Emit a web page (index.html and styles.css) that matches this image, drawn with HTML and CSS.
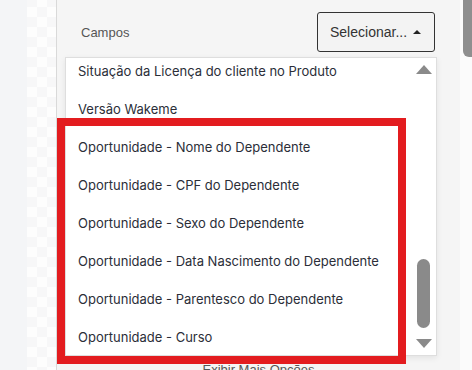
FILE: index.html
```html
<!DOCTYPE html>
<html lang="pt-BR">
<head>
  <meta charset="UTF-8">
  <meta name="viewport" content="width=device-width, initial-scale=1.0">
  <title>Campos</title>
  <link rel="stylesheet" href="styles.css">
</head>
<body>

  <div class="gutter"></div>
  <div class="checker"></div>

  <!-- painel de filtros -->
  <section class="panel">
    <div class="field-row">
      <span class="field-label">Campos</span>
      <button class="select-btn">
        <span>Selecionar...</span>
        <span class="caret"></span>
      </button>
    </div>

    <div class="dropdown">
      <ul class="options">
        <li>Situação da Licença do cliente no Produto</li>
        <li>Versão Wakeme</li>
        <li>Oportunidade - Nome do Dependente</li>
        <li>Oportunidade - CPF do Dependente</li>
        <li>Oportunidade - Sexo do Dependente</li>
        <li>Oportunidade - Data Nascimento do Dependente</li>
        <li>Oportunidade - Parentesco do Dependente</li>
        <li>Oportunidade - Curso</li>
      </ul>
      <div class="list-scroll">
        <span class="arrow-up"></span>
        <span class="thumb"></span>
        <span class="arrow-down"></span>
      </div>
    </div>

    <p class="more">Exibir Mais Opções</p>
  </section>

  <div class="page-scroll">
    <span class="page-thumb"></span>
  </div>

  <!-- destaque -->
  <div class="highlight"></div>

</body>
</html>
```

FILE: styles.css
```css
body {
  margin: 0;
  height: 370px;
  overflow: hidden;
  display: flex;
  background-color: #f4f5f7;
  font-family: "Liberation Sans", Arial, sans-serif;
  color: #333;
}

.gutter {
  width: 27px;
}

.checker {
  width: 29px;
  background-color: #fdfdfd;
  background-image: repeating-conic-gradient(#f7f7f8 0 25%, #fdfdfd 0 50%);
  background-size: 20px 20px;
  background-position: 0 7px;
}

/* painel */
.panel {
  width: 403px;
  border-left: 1px solid #d9d9d9;
  background-color: #f5f5f5;
}

.field-row {
  display: flex;
  align-items: center;
  justify-content: space-between;
  padding: 12px 25px 0 24px;
}

.field-label {
  font-size: 13px;
  color: #555;
}

.select-btn {
  width: 118px;
  height: 40px;
  display: flex;
  align-items: center;
  justify-content: space-between;
  padding: 0 13px 0 12px;
  background-color: #f3f3f3;
  border: 1px solid #333;
  border-radius: 3px;
  font-family: "Liberation Sans", Arial, sans-serif;
  font-size: 14px;
  color: #333;
}

.caret {
  width: 0;
  height: 0;
  border-left: 4px solid transparent;
  border-right: 4px solid transparent;
  border-bottom: 4px solid #222;
}

/* lista de opções */
.dropdown {
  display: flex;
  width: 370px;
  height: 297px;
  margin: 5px 0 0 8px;
  background-color: #fff;
  border: 1px solid #dedede;
  box-shadow: 0 2px 6px rgba(0, 0, 0, 0.08);
  overflow: hidden;
}

.options {
  flex: 1;
  list-style: none;
  margin: -6px 0 0;
  padding: 0;
  font-family: Inter, "Liberation Sans", sans-serif;
  font-size: 13px;
  color: #2b2e38;
}

.options li {
  height: 38px;
  line-height: 38px;
  padding-left: 12px;
  white-space: nowrap;
}

.list-scroll {
  width: 25px;
  display: flex;
  flex-direction: column;
  align-items: center;
  padding-top: 7px;
}

.arrow-up {
  width: 0;
  height: 0;
  border-left: 8px solid transparent;
  border-right: 8px solid transparent;
  border-bottom: 9px solid #8a8a8a;
}

.thumb {
  width: 13px;
  height: 69px;
  margin-top: 185px;
  border-radius: 7px;
  background-color: #8a8a8a;
}

.arrow-down {
  width: 0;
  height: 0;
  margin-top: 11px;
  border-left: 8px solid transparent;
  border-right: 8px solid transparent;
  border-top: 9px solid #8a8a8a;
}

.more {
  margin: 6px 0 0;
  text-align: center;
  font-size: 13px;
  color: #555;
}

/* barra de rolagem da página */
.page-scroll {
  flex: 1;
  display: flex;
  justify-content: flex-end;
  background-color: #fbfbfb;
}

.page-scroll .page-thumb {
  width: 9px;
  height: 57px;
  background-color: #8f8f8f;
  border-radius: 0 0 0 6px;
}

/* caixa vermelha de destaque */
.highlight {
  position: absolute;
  left: 57px;
  top: 118px;
  width: 333px;
  height: 230px;
  border: 8px solid #e31c1f;
}
```
